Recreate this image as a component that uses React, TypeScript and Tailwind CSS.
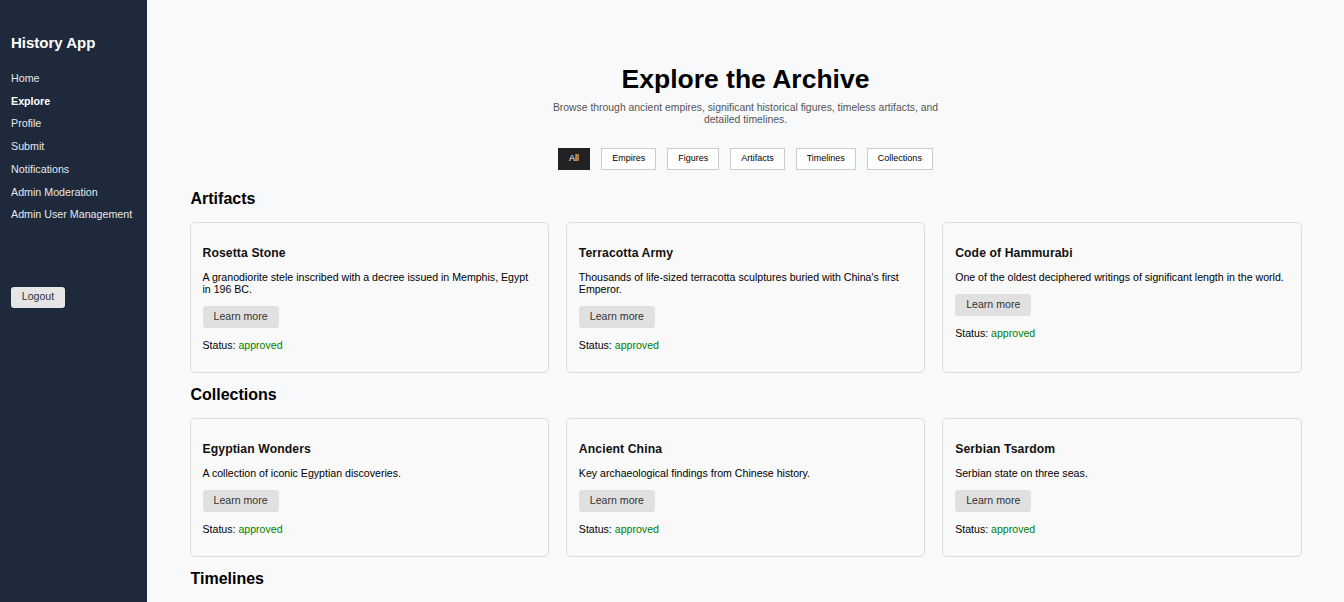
const navItems = ["Home", "Explore", "Profile", "Submit", "Notifications", "Admin Moderation", "Admin User Management"];
const filters = ["All", "Empires", "Figures", "Artifacts", "Timelines", "Collections"];

type Item = { title: string; description: string };

const sections: { name: string; items: Item[] }[] = [
  {
    name: "Artifacts",
    items: [
      { title: "Rosetta Stone", description: "A granodiorite stele inscribed with a decree issued in Memphis, Egypt in 196 BC." },
      { title: "Terracotta Army", description: "Thousands of life-sized terracotta sculptures buried with China's first Emperor." },
      { title: "Code of Hammurabi", description: "One of the oldest deciphered writings of significant length in the world." },
    ],
  },
  {
    name: "Collections",
    items: [
      { title: "Egyptian Wonders", description: "A collection of iconic Egyptian discoveries." },
      { title: "Ancient China", description: "Key archaeological findings from Chinese history." },
      { title: "Serbian Tsardom", description: "Serbian state on three seas." },
    ],
  },
  {
    name: "Timelines",
    items: [
      { title: "Roman Empire", description: "From the founding of Rome to the fall of Constantinople." },
      { title: "Ancient Egypt", description: "Dynasties of the Nile valley." },
      { title: "Middle Ages", description: "Europe from the 5th to the 15th century." },
    ],
  },
];

function Card({ item }: { item: Item }) {
  return (
    <div className="rounded-[5px] border border-[#dcdcdc] bg-[#f9f9fa] px-3 pt-[23px] pb-[21px]">
      <h3 className="text-[12.2px] leading-[15px] font-bold tracking-[0.1px] text-[#111]">{item.title}</h3>
      <p className="mt-[10px] text-[10.6px] leading-[12px] text-black">{item.description}</p>
      <button className="mt-[11px] h-[22px] rounded-[3px] bg-[#e0e0e0] px-[11px] text-[10.6px] text-[#333]">
        Learn more
      </button>
      <p className="mt-[11px] text-[10.6px] leading-[12px] text-black">
        Status: <span className="text-[#008000]">approved</span>
      </p>
    </div>
  );
}

export default function App() {
  return (
    <div className="flex h-screen overflow-hidden bg-[#f8f9fb] font-['Liberation_Sans',Arial,sans-serif]">
      <aside className="flex w-[147px] shrink-0 flex-col bg-[#1e293b] px-[11px] pt-[34px] text-white">
        <h1 className="text-[15px] leading-[18px] font-bold">History App</h1>
        <nav className="mt-[15px] flex flex-col">
          {navItems.map((n) => (
            <a
              key={n}
              className={`whitespace-nowrap text-[10.7px] leading-[22.7px] ${n === "Explore" ? "font-bold text-white" : "text-[#e5e7eb]"}`}
            >
              {n}
            </a>
          ))}
        </nav>
        <button className="mt-[61px] h-[21px] w-[54px] rounded-[3px] bg-[#e5e5e5] text-[10.6px] text-[#333]">
          Logout
        </button>
      </aside>
      <main className="flex-1 overflow-hidden">
        <div className="mx-auto w-[1112px] pt-[63px]">
          <h2 className="text-center text-[26.5px] leading-[32px] font-bold text-black">Explore the Archive</h2>
          <p className="mx-auto mt-[7px] max-w-[400px] text-center text-[10.4px] leading-[12px] text-[#555]">
            Browse through ancient empires, significant historical figures, timeless artifacts, and detailed timelines.
          </p>
          <div className="mt-[22px] flex justify-center gap-[11px]">
            {filters.map((f) => (
              <button
                key={f}
                className={`h-[22px] border px-[10px] text-[9px] ${
                  f === "All" ? "border-[#222] bg-[#222] text-white" : "border-[#ccc] bg-white text-black"
                }`}
              >
                {f}
              </button>
            ))}
          </div>
          <div className="mt-[19px]">
            {sections.map((s) => (
              <section key={s.name} className="mb-[12px]">
                <h2 className="mb-[14px] pl-px text-[16px] leading-[19px] font-bold text-black">{s.name}</h2>
                <div className="grid grid-cols-3 gap-[17px]">
                  {s.items.map((it) => (
                    <Card key={it.title} item={it} />
                  ))}
                </div>
              </section>
            ))}
          </div>
        </div>
      </main>
    </div>
  );
}
